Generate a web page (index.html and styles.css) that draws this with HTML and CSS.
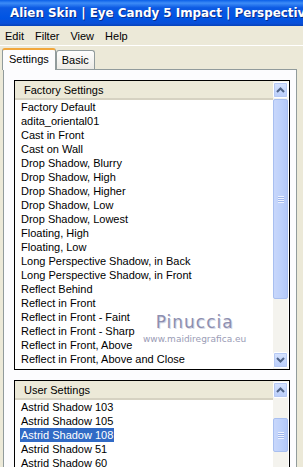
FILE: index.html
```html
<!DOCTYPE html>
<html lang="en">

<head>
    <meta charset="UTF-8">
    <title>Alien Skin | Eye Candy 5 Impact | Perspective Shadow</title>
    <link rel="stylesheet" href="styles.css">
</head>

<body>
    <div class="window">
        <div class="titlebar">
            <svg class="app-icon" width="14" height="16" viewBox="0 0 14 16">
                <ellipse cx="7" cy="8" rx="6" ry="7.5" fill="#111" stroke="#eee" stroke-width="1"/>
                <ellipse cx="5" cy="7" rx="2" ry="2.6" fill="#fff" transform="rotate(-30 5 7)"/>
                <ellipse cx="9.5" cy="7.5" rx="1.2" ry="1.8" fill="#bbb"/>
            </svg>
            <span class="title">Alien Skin | Eye Candy 5 Impact | Perspective</span>
        </div>

        <div class="menubar">
            <span class="menu-item">Edit</span>
            <span class="menu-item">Filter</span>
            <span class="menu-item">View</span>
            <span class="menu-item">Help</span>
        </div>

        <div class="tabs">
            <div class="tab active">Settings</div>
            <div class="tab">Basic</div>
        </div>

        <div class="panel">
            <div class="listbox factory">
                <div class="list-main">
                    <div class="list-header">Factory Settings</div>
                    <ul class="list-items">
                        <li>Factory Default</li>
                        <li>adita_oriental01</li>
                        <li>Cast in Front</li>
                        <li>Cast on Wall</li>
                        <li>Drop Shadow, Blurry</li>
                        <li>Drop Shadow, High</li>
                        <li>Drop Shadow, Higher</li>
                        <li>Drop Shadow, Low</li>
                        <li>Drop Shadow, Lowest</li>
                        <li>Floating, High</li>
                        <li>Floating, Low</li>
                        <li>Long Perspective Shadow, in Back</li>
                        <li>Long Perspective Shadow, in Front</li>
                        <li>Reflect Behind</li>
                        <li>Reflect in Front</li>
                        <li>Reflect in Front - Faint</li>
                        <li>Reflect in Front - Sharp</li>
                        <li>Reflect in Front, Above</li>
                        <li>Reflect in Front, Above and Close</li>
                    </ul>
                </div>
                <div class="scrollbar">
                    <div class="sb-btn">
                        <svg width="9" height="6" viewBox="0 0 9 6"><path d="M1 5 L4.5 1.5 L8 5" fill="none" stroke="#4d6185" stroke-width="2"/></svg>
                    </div>
                    <div class="sb-thumb tall"><span class="grip"></span></div>
                    <div class="sb-track"></div>
                    <div class="sb-btn">
                        <svg width="9" height="6" viewBox="0 0 9 6"><path d="M1 1 L4.5 4.5 L8 1" fill="none" stroke="#4d6185" stroke-width="2"/></svg>
                    </div>
                </div>
                <div class="watermark">
                    <span class="wm-name">Pinuccia</span>
                    <span class="wm-site">www.maidiregrafica.eu</span>
                </div>
            </div>

            <div class="listbox user">
                <div class="list-main">
                    <div class="list-header">User Settings</div>
                    <ul class="list-items">
                        <li>Astrid Shadow 103</li>
                        <li>Astrid Shadow 105</li>
                        <li><span class="selected">Astrid Shadow 108</span></li>
                        <li>Astrid Shadow 51</li>
                        <li>Astrid Shadow 60</li>
                    </ul>
                </div>
                <div class="scrollbar">
                    <div class="sb-btn">
                        <svg width="9" height="6" viewBox="0 0 9 6"><path d="M1 5 L4.5 1.5 L8 5" fill="none" stroke="#4d6185" stroke-width="2"/></svg>
                    </div>
                    <div class="sb-track short"></div>
                    <div class="sb-thumb small"><span class="grip"></span></div>
                    <div class="sb-track"></div>
                </div>
            </div>
        </div>
    </div>
</body>
</html>
```

FILE: styles.css
```css
* {
    margin: 0;
    padding: 0;
    box-sizing: border-box;
}

body {
    width: 303px;
    height: 467px;
    overflow: hidden;
    background: #ece9d8;
    font-family: 'Liberation Sans', Arial, sans-serif;
    font-size: 11px;
    color: #000;
}

.window {
    display: flex;
    flex-direction: column;
    height: 467px;
}

/* Title bar */
.titlebar {
    height: 26px;
    flex: none;
    display: flex;
    align-items: center;
    gap: 5px;
    padding-left: 5px;
    background: linear-gradient(180deg, #0a5fe8 0%, #3d8cf7 12%, #0c5ae3 30%, #0054e3 70%, #0a4fd8 90%, #0742b8 100%);
    white-space: nowrap;
    overflow: hidden;
}

.title {
    color: #fff;
    font-family: 'DejaVu Sans', Verdana, sans-serif;
    font-weight: bold;
    font-size: 11.9px;
    text-shadow: 1px 1px 0 #0a2c8a;
}

/* Menu bar */
.menubar {
    height: 20px;
    flex: none;
    display: flex;
    align-items: center;
    border-bottom: 1px solid #fff;
}

.menu-item {
    padding: 0 6px 0 5px;
}

/* Tabs */
.tabs {
    height: 22px;
    flex: none;
    display: flex;
    align-items: flex-end;
    padding-left: 2px;
    margin-top: 1px;
}

.tab {
    height: 19px;
    padding: 3px 5px 0;
    background: linear-gradient(180deg, #fefefe, #ecebe6);
    border: 1px solid #919b9c;
    border-bottom: none;
    border-radius: 3px 3px 0 0;
}

.tab.active {
    height: 22px;
    padding: 3px 6px 0;
    background: #fcfcfe;
    border-top: 2px solid #f2a73a;
    position: relative;
    z-index: 1;
    margin-bottom: -1px;
}

/* Tab panel */
.panel {
    flex: 1;
    margin: 0 6px 0 3px;
    background: #fcfcfe;
    border: 1px solid #919b9c;
    border-bottom: none;
    padding: 10px 6px 0 10px;
    display: flex;
    flex-direction: column;
    gap: 10px;
    min-height: 0;
}

.listbox {
    display: flex;
    border: 1px solid #000;
    background: #fff;
    position: relative;
    flex: none;
}

.listbox.factory {
    height: 290px;
}

.listbox.user {
    height: 120px;
}

.list-main {
    flex: 1;
    min-width: 0;
    display: flex;
    flex-direction: column;
}

.list-header {
    height: 19px;
    flex: none;
    background: #ece9d8;
    border-bottom: 2px solid #d6d2c2;
    padding: 3px 0 0 9px;
}

.list-items {
    list-style: none;
    padding: 0 0 0 6px;
    overflow: hidden;
}

.list-items li {
    height: 14px;
    line-height: 14px;
    white-space: nowrap;
}

.selected {
    display: inline-block;
    background: #316ac5;
    color: #fff;
    padding: 0 1px;
    margin-left: -1px;
}

/* Scrollbar */
.scrollbar {
    width: 15px;
    flex: none;
    display: flex;
    flex-direction: column;
    background: #f4f3ee;
    padding: 1px 0 1px;
    margin-right: 1px;
}

.sb-btn {
    height: 16px;
    flex: none;
    display: flex;
    align-items: center;
    justify-content: center;
    background: linear-gradient(180deg, #d6e3fe, #b9cdfa);
    border: 1px solid #fff;
    outline: 1px solid #b6c9f4;
    outline-offset: -2px;
    border-radius: 2px;
}

.sb-thumb {
    flex: none;
    display: flex;
    align-items: center;
    justify-content: center;
    background: linear-gradient(90deg, #c8d7fb, #bcd0fb 60%, #b4c8f8);
    border: 1px solid #a8bff0;
    border-radius: 2px;
    margin-top: 1px;
}

.sb-thumb.tall {
    height: 200px;
}

.sb-thumb.small {
    height: 34px;
}

.grip {
    width: 6px;
    height: 7px;
    background: repeating-linear-gradient(180deg, #eef3fe 0 1px, #9fb6ec 1px 2px);
}

.sb-track {
    flex: 1;
}

.sb-track.short {
    flex: none;
    height: 19px;
}

/* Watermark overlaid on the list */
.watermark {
    position: absolute;
    left: 128px;
    top: 231px;
    display: flex;
    flex-direction: column;
    align-items: center;
    color: #8d8fb0;
    pointer-events: none;
}

.wm-name {
    font-family: 'DejaVu Sans', sans-serif;
    font-size: 17px;
    letter-spacing: 1px;
    line-height: 20px;
    text-shadow: 1px 1px 0 #d8d9e6;
}

.wm-site {
    font-family: 'DejaVu Sans', sans-serif;
    font-size: 9px;
    line-height: 14px;
    color: #9a9cb6;
}
```
